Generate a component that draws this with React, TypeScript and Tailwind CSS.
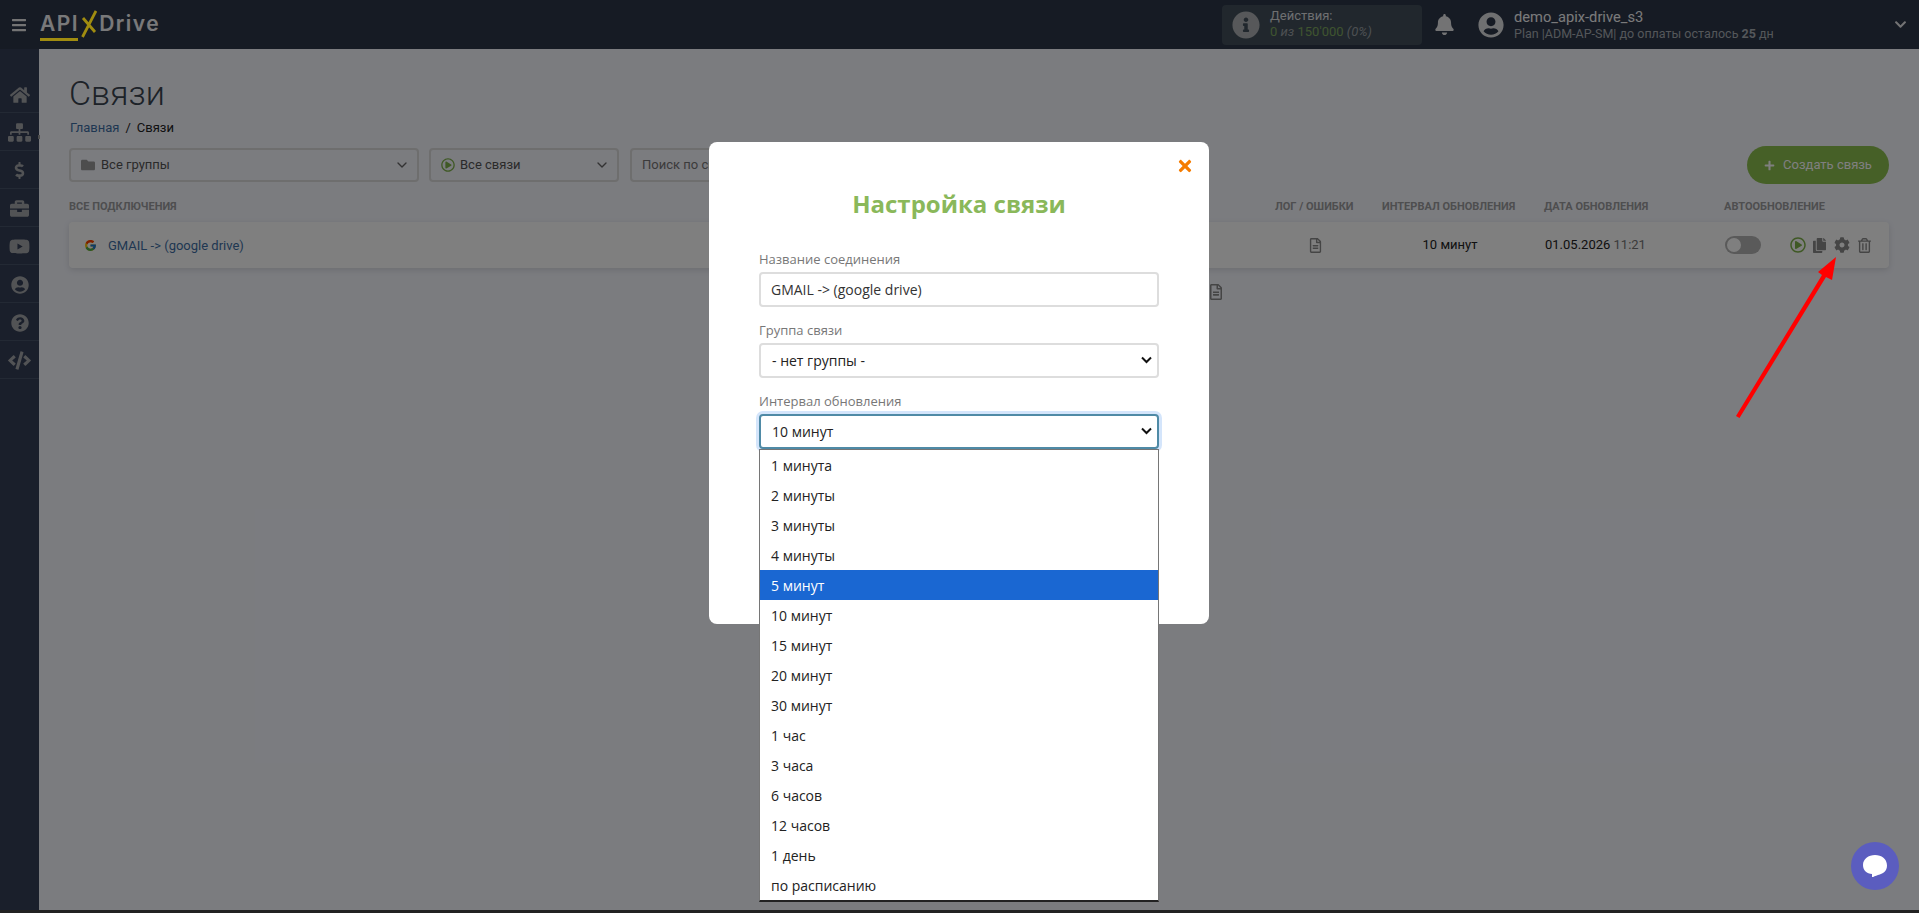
import React from "react";
import { ChevronDown } from "lucide-react";
import {
  FaBars,
  FaBell,
  FaBriefcase,
  FaChevronDown,
  FaCode,
  FaCog,
  FaCopy,
  FaDollarSign,
  FaFolder,
  FaHome,
  FaInfoCircle,
  FaPlus,
  FaQuestionCircle,
  FaRegFileAlt,
  FaRegPlayCircle,
  FaRegTrashAlt,
  FaSitemap,
  FaTimes,
  FaUserCircle,
  FaYoutube,
} from "react-icons/fa";
import { FcGoogle } from "react-icons/fc";

const sideIcons = [
  <FaHome className="w-[20px] h-[20px]" />,
  <FaSitemap className="w-[23px] h-[23px]" />,
  <FaDollarSign className="w-[17px] h-[17px]" />,
  <FaBriefcase className="w-[19px] h-[19px]" />,
  <FaYoutube className="w-[21px] h-[21px]" />,
  <FaUserCircle className="w-[18px] h-[18px]" />,
  <FaQuestionCircle className="w-[18px] h-[18px]" />,
  <FaCode className="w-[23px] h-[23px]" />,
];

const intervals = [
  "1 минута",
  "2 минуты",
  "3 минуты",
  "4 минуты",
  "5 минут",
  "10 минут",
  "15 минут",
  "20 минут",
  "30 минут",
  "1 час",
  "3 часа",
  "6 часов",
  "12 часов",
  "1 день",
  "по расписанию",
];

const tableCols = "grid grid-cols-[1206px_107px_162px_180px_165px]";

function Header() {
  return (
    <header className="h-[49px] shrink-0 bg-[#2c3648] flex items-center font-['Roboto',sans-serif]">
      <FaBars className="ml-[11px] w-[16px] h-[16px] text-[#e8e8e8]" />
      <div className="ml-[13px] flex items-center h-[49px] text-[#f2f2f4] font-['Inter',sans-serif] font-semibold text-[21px] tracking-[1.5px] leading-none">
        <span className="relative mt-[-2px]">
          API
          <span className="absolute z-10 left-0 right-[1px] top-[25px] h-[3px] bg-[#a08c10]" />
        </span>
        <svg viewBox="0 0 16 28" className="relative z-10 w-[16px] h-[28px] ml-[2px] -mt-[2px]">
          <path d="M15 1 L1.500 27 M2 8 L14 22" stroke="#a08c10" strokeWidth="2.8" fill="none" />
        </svg>
        <span className="ml-[2px] mt-[-2px]">Drive</span>
      </div>
      <div className="ml-auto w-[200px] h-[40px] bg-[#424f5a] rounded-[4px] flex items-center pl-[10px] mr-[13px]">
        <FaInfoCircle className="w-[28px] h-[28px] text-[#aeb1b5]" />
        <div className="ml-[10px] text-[13px] leading-[16px]">
          <div className="text-[#dcdee0] -mt-[1px]">Действия:</div>
          <div className="text-[#9a9fa4]">
            <span className="text-[#7fa860]">0</span> <i>из</i>{" "}
            <span className="text-[#7fa860]">150'000</span> <i>(0%)</i>
          </div>
        </div>
      </div>
      <FaBell className="w-[19px] h-[21px] text-[#e6e6e8]" />
      <FaUserCircle className="ml-[24px] w-[26px] h-[26px] text-[#dfe0e2]" />
      <div className="ml-[10px] w-[380px]">
        <div className="text-[14.7px] leading-[18px] text-[#f4f4f6]">demo_apix-drive_s3</div>
        <div className="text-[12.5px] leading-[15px] text-[#a9aeb5]">
          Plan |ADM-AP-SM| до оплаты осталось <b>25</b> дн
        </div>
      </div>
      <FaChevronDown className="w-[13px] h-[13px] text-[#e6e6e8] mr-[12px]" />
    </header>
  );
}

function Sidebar() {
  return (
    <aside className="relative w-[39px] shrink-0 bg-[#343e56] pt-[26px]">
      {sideIcons.map((icon, idx) => (
        <div
          key={idx}
          className="h-[38px] pt-[2px] flex items-center justify-center border-b border-[#475268] text-[#a4a6aa]"
        >
          {icon}
        </div>
      ))}
      <span className="absolute left-[38px] top-[86px] w-[2px] h-[4px] bg-[#9a9a9a]" />
    </aside>
  );
}

function Connections() {
  return (
    <main className="flex-1 pl-[30px] pr-[30px] pt-[21px] font-['Roboto',sans-serif] bg-[#f6f8ff]">
      <h1 className="text-[34px] leading-[46px] font-light text-[#3a4450]">Связи</h1>
      <div className="mt-[4px] text-[13px] leading-[16px] pl-[1px] text-[#222]">
        <span className="text-[#3f6fa5]">Главная</span>
        <span className="mx-[6px]">/</span>
        Связи
      </div>
      <div className="mt-[10px] flex items-center h-[38px] text-[13px] text-[#555]">
        <div className="w-[350px] h-[34px] border-2 border-[#dcdcdc] rounded-[4px] flex items-center pl-[10px] pr-[7px]">
          <FaFolder className="w-[14px] h-[14px] text-[#9a9a9a] mr-[6px]" />
          Все группы
          <ChevronDown className="ml-auto w-[16px] h-[16px] text-[#666]" />
        </div>
        <div className="ml-[10px] w-[190px] h-[34px] border-2 border-[#dcdcdc] rounded-[4px] flex items-center pl-[10px] pr-[7px]">
          <FaRegPlayCircle className="w-[14px] h-[14px] text-[#7fb24a] mr-[5px]" />
          Все связи
          <ChevronDown className="ml-auto w-[16px] h-[16px] text-[#666]" />
        </div>
        <div className="ml-[11px] w-[400px] h-[34px] border-2 border-[#dcdcdc] rounded-[4px] flex items-center px-[10px] text-[#777]">
          Поиск по связям
        </div>
        <button className="ml-auto w-[142px] h-[38px] rounded-full bg-[#8dc04f] text-white flex items-center justify-center gap-[8px] text-[13px]">
          <FaPlus className="w-[11px] h-[11px]" />
          Создать связь
        </button>
      </div>
      <div className={`${tableCols} mt-[15px] h-[16px] text-[11px] leading-[16px] font-bold text-[#9c9c9e] uppercase`}>
        <div>Все подключения</div>
        <div>Лог / ошибки</div>
        <div>Интервал обновления</div>
        <div>Дата обновления</div>
        <div>Автообновление</div>
      </div>
      <div className={`${tableCols} mt-[7px] h-[46px] items-center bg-white rounded-[4px] shadow-[0_2px_6px_rgba(0,0,0,0.12)] text-[13px]`}>
        <div className="pl-[15px] pt-[1px] flex items-center gap-[11px] text-[#3f6fa5]">
          <FcGoogle className="w-[13px] h-[13px]" />
          GMAIL -&gt; (google drive)
        </div>
        <div className="w-[80px] flex justify-center">
          <FaRegFileAlt className="w-[13px] h-[15px] text-[#8a8a8a]" />
        </div>
        <div className="w-[136px] text-center text-[#222]">10 минут</div>
        <div className="pl-[1px] text-[#222]">
          01.05.2026 <span className="text-[#777]">11:21</span>
        </div>
        <div className="flex items-center pl-[1px]">
          <div className="w-[36px] h-[18px] rounded-full bg-[#b4b4b4] p-[2px]">
            <div className="w-[14px] h-[14px] rounded-full bg-white" />
          </div>
          <FaRegPlayCircle className="ml-[29px] w-[16px] h-[16px] text-[#7fb24a]" />
          <FaCopy className="ml-[7px] w-[13px] h-[15px] text-[#8a8a8a]" />
          <FaCog className="ml-[8px] w-[16px] h-[16px] text-[#8a8a8a]" />
          <FaRegTrashAlt className="ml-[8px] w-[13px] h-[15px] text-[#8a8a8a]" />
        </div>
      </div>
      <FaRegFileAlt className="ml-[1140px] mt-[16px] w-[14px] h-[16px] text-[#8a8a8a]" />
    </main>
  );
}

function SelectBox({ label, focused, children }: { label: string; focused?: boolean; children: React.ReactNode }) {
  return (
    <>
      <label className="block mt-[13px] mb-[3px] text-[13px] leading-[20px] text-[#777]">{label}</label>
      <div className="relative w-[400px] h-[35px]">
        <div
          className={`h-[35px] border-2 rounded-[4px] pl-[11px] text-[14px] leading-[31px] text-[#222] bg-white ${
            focused ? "border-[#4f8aa6] shadow-[0_0_0_3px_#d4e5fb]" : "border-[#ddd]"
          }`}
        >
          {children}
        </div>
        <svg viewBox="0 0 11 8" className="absolute right-[7px] top-[13px] w-[11px] h-[8px]">
          <path d="M1 1.500 L5.500 6 L10 1.500" stroke="#111" strokeWidth="2" fill="none" />
        </svg>
      </div>
    </>
  );
}

function Modal() {
  return (
    <div className="absolute left-[709px] top-[142px] w-[500px] h-[482px] bg-white rounded-[8px] px-[50px] pt-[45px] font-['Open_Sans',sans-serif]">
      <FaTimes className="absolute right-[15px] top-[15px] w-[18px] h-[18px] text-[#f57c00]" />
      <h2 className="text-center text-[24px] leading-[34px] font-bold text-[#8ab85a]">Настройка связи</h2>
      <label className="block mt-[28px] mb-[3px] text-[13px] leading-[20px] text-[#777]">Название соединения</label>
      <input
        readOnly
        value="GMAIL -> (google drive)"
        className="block w-[400px] h-[35px] border-2 border-[#ddd] rounded-[4px] px-[10px] text-[14px] text-[#333] outline-none"
      />
      <SelectBox label="Группа связи">- нет группы -</SelectBox>
      <SelectBox label="Интервал обновления" focused>
        10 минут
      </SelectBox>
      <ul className="absolute left-[50px] top-[307px] w-[400px] bg-white border border-[#767676] border-b-2 border-b-[#222] text-[14px] text-[#222]">
        {intervals.map((item) => (
          <li
            key={item}
            className={`h-[30px] leading-[31px] pl-[11px] ${item === "5 минут" ? "bg-[#1a67d2] text-white" : ""}`}
          >
            {item}
          </li>
        ))}
      </ul>
    </div>
  );
}

export default function App() {
  return (
    <div className="w-[1919px] h-[913px] flex flex-col overflow-hidden">
      <div className="relative h-[910px] flex flex-col">
        <Header />
        <div className="flex-1 flex">
          <Sidebar />
          <Connections />
        </div>
        <div className="absolute inset-0 bg-black/50" />
        <Modal />
        <svg className="absolute left-[1730px] top-[250px] w-[115px] h-[175px]" viewBox="0 0 115 175">
          <path d="M106 7 L102 30 L96 27 L9.500 168 L6 166 L92 25 L88 22 Z" fill="#ff0000" />
        </svg>
        <div className="absolute left-[1851px] top-[842px] w-[48px] h-[48px] rounded-full bg-[#5b5dbf] flex items-center justify-center">
          <svg viewBox="0 0 24 24" className="w-[24px] h-[24px]">
            <path d="M12 1 C18.500 1 24 5 24 11.500 C24 17 20 20 15 21 C12 22 9.500 23.500 9 23 L9 20 C4 19.500 0 16.500 0 11 C0 5 5.500 1 12 1 Z" fill="#fff" />
          </svg>
        </div>
      </div>
      <div className="h-[3px] bg-[#222]" />
    </div>
  );
}
